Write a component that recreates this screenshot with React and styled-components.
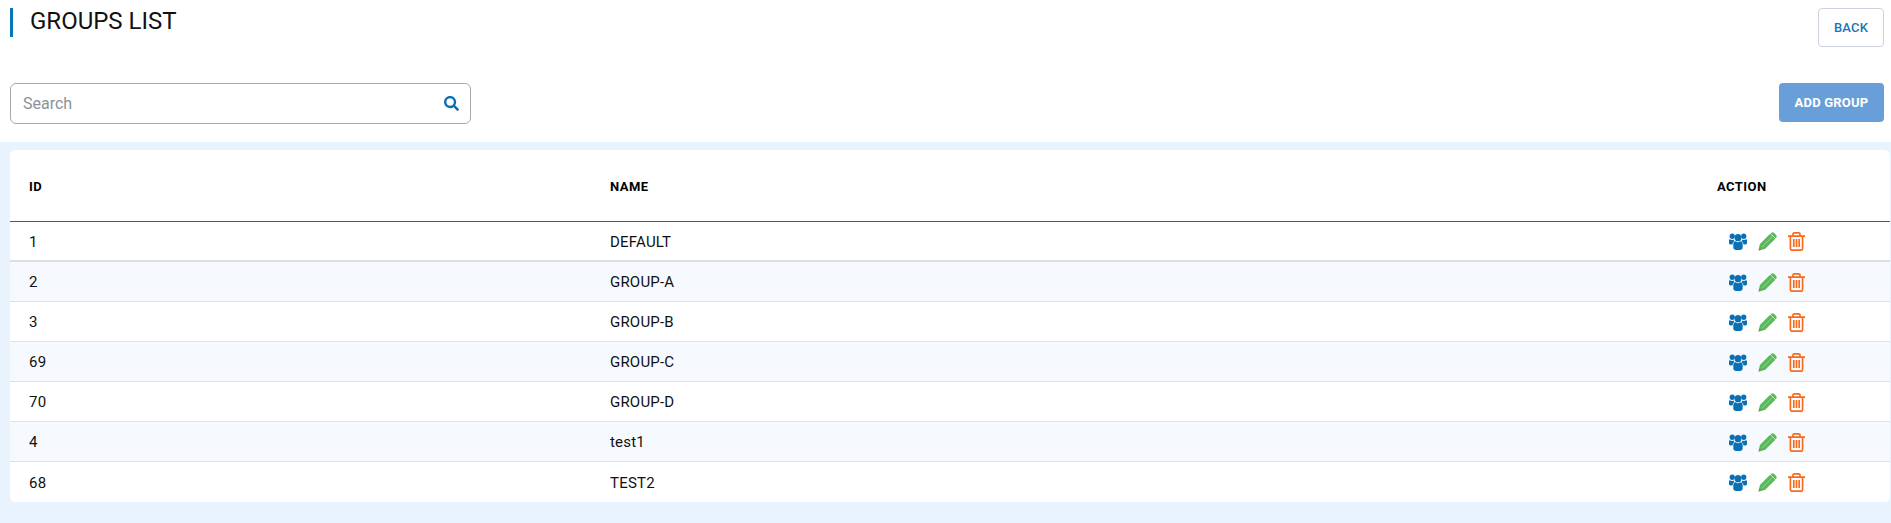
import React from 'react'
import styled, { createGlobalStyle } from 'styled-components'
import { FaSearch } from 'react-icons/fa'

const GlobalStyle = createGlobalStyle`
  html, body {
    margin: 0;
    padding: 0;
    background: #fff;
    font-family: Roboto, "Liberation Sans", sans-serif;
  }
`

const Page = styled.div`
  width: 1891px;
  height: 523px;
  overflow: hidden;
  display: flex;
  flex-direction: column;
`

const TopBar = styled.div`
  display: flex;
  justify-content: space-between;
  align-items: flex-start;
  padding: 8px 7px 0 10px;
  height: 83px;
  box-sizing: border-box;
`

const Title = styled.h1`
  margin: 0;
  height: 29px;
  border-left: 3px solid #0a78b8;
  padding-left: 17px;
  font-size: 24px;
  line-height: 27px;
  font-weight: 400;
  color: #111;
`

const BackButton = styled.button`
  width: 66px;
  height: 39px;
  box-sizing: border-box;
  background: #fff;
  border: 1px solid #ccd3de;
  border-radius: 4px;
  color: #1a75b5;
  font-family: inherit;
  font-size: 13px;
  font-weight: 500;
  letter-spacing: 0.2px;
  padding: 0;
`

const ToolBar = styled.div`
  display: flex;
  justify-content: space-between;
  align-items: flex-start;
  padding: 0 7px 0 10px;
  height: 59px;
`

const SearchBox = styled.div`
  width: 461px;
  height: 41px;
  box-sizing: border-box;
  border: 1px solid #aaa;
  border-radius: 6px;
  display: flex;
  align-items: center;
  justify-content: space-between;
  padding: 0 11px 0 12px;
  color: #8a919b;
  font-size: 16px;
  svg { color: #0a70b4; font-size: 15px; }
`

const AddButton = styled.button`
  width: 105px;
  height: 39px;
  background: #689fd9;
  border: none;
  border-radius: 4px;
  color: #fff;
  font-family: inherit;
  font-size: 13px;
  font-weight: 700;
  letter-spacing: 0.2px;
  padding: 0;
`

const Content = styled.div`
  flex: 1;
  background: #e9f3fe;
  padding: 8px 1px 0 10px;
`

const Card = styled.div`
  background: #fff;
  border-radius: 6px;
  overflow: hidden;
`

const Row = styled.div`
  display: grid;
  grid-template-columns: 581px 1107px 1fr;
  align-items: center;
  box-sizing: border-box;
  padding: 1px 0 0 19px;
  height: ${p => p.$height || 40}px;
  font-size: 15px;
  letter-spacing: 0.2px;
  color: #111;
  background: ${p => (p.$alt ? '#f6faff' : '#fff')};
  border-bottom: ${p => p.$border || '1px solid #dfe3e8'};
`

const HeadCell = styled.div`
  font-size: 13px;
  font-weight: 700;
  color: #000;
  letter-spacing: 0.45px;
`

const Actions = styled.div`
  display: flex;
  align-items: center;
  gap: 11px;
  padding-left: 12px;
`

const groups = [
  { id: 1, name: 'DEFAULT' },
  { id: 2, name: 'GROUP-A' },
  { id: 3, name: 'GROUP-B' },
  { id: 69, name: 'GROUP-C' },
  { id: 70, name: 'GROUP-D' },
  { id: 4, name: 'test1' },
  { id: 68, name: 'TEST2' },
]

// fa4 style glyphs, the ones in react-icons are thinner
const UsersIcon = () => (
  <svg width="18" height="19" viewBox="0 0 20 20" preserveAspectRatio="none" fill="#0a70b4">
    <circle cx="10" cy="6" r="3.800" />
    <circle cx="3.600" cy="4.500" r="2.900" />
    <circle cx="16.400" cy="4.500" r="2.900" />
    <path d="M4.800 12.500c0-1.500 1.100-2.700 2.600-2.700.8.600 1.600.9 2.600.9s1.800-.3 2.600-.9c1.500 0 2.600 1.200 2.600 2.700v4c0 1.700-1.600 2.500-5.200 2.500s-5.200-.8-5.200-2.500z" />
    <path d="M0 9c0-.9.500-1.400 1.100-1.400.7.500 1.500.8 2.400.8.600 0 1.200-.1 1.700-.4.100.7.400 1.200.9 1.700-1.300.6-2.200 1.800-2.200 3.400H1.400C.5 13.100 0 12.600 0 11.700z" />
    <path d="M20 9c0-.9-.5-1.400-1.100-1.400-.7.500-1.500.8-2.400.8-.6 0-1.200-.1-1.700-.4-.1.700-.4 1.200-.9 1.700 1.300.6 2.200 1.800 2.200 3.400h2.500c.9 0 1.400-.5 1.400-1.400z" />
  </svg>
)

const PencilIcon = () => (
  <svg width="19" height="19" viewBox="0 0 20 20">
    <path fill="#5cb85c" d="M.6 19.400l1.400-6.800L12.800 1.800 18.200 7.200 7.400 18z" />
    <path fill="#5cb85c" d="M14 .9c.8-.8 2-.8 2.800 0l2.300 2.300c.8.8.8 2 0 2.800l-.7.700-5.100-5.100z" />
    <path stroke="#a5d6a5" strokeWidth=".8" fill="none" d="M4.200 15.800L14.800 5.200" />
    <path fill="#7f8f5a" d="M.6 19.400l.7-3.400 2.700 2.700z" />
  </svg>
)

const TrashIcon = () => (
  <svg width="17" height="19" viewBox="0 0 17 19" fill="none" stroke="#f96a1c" strokeWidth="1.700">
    <path d="M0 4.200h17M5 4V2.200C5 1.300 5.600.9 6.300.9h4.400c.7 0 1.300.4 1.300 1.300V4" />
    <path d="M2.400 4.200v12.300c0 1 .7 1.700 1.700 1.700h8.800c1 0 1.700-.7 1.700-1.700V4.200" />
    <path d="M5.800 7v8M8.500 7v8M11.200 7v8" />
  </svg>
)

export default function App() {
  return (
    <Page>
      <GlobalStyle />
      <TopBar>
        <Title>GROUPS LIST</Title>
        <BackButton>BACK</BackButton>
      </TopBar>
      <ToolBar>
        <SearchBox>
          <span>Search</span>
          <FaSearch />
        </SearchBox>
        <AddButton>ADD GROUP</AddButton>
      </ToolBar>
      <Content>
        <Card>
          <Row $height={72} $border="1px solid #0a70a8">
            <HeadCell>ID</HeadCell>
            <HeadCell>NAME</HeadCell>
            <HeadCell>ACTION</HeadCell>
          </Row>
          {groups.map((g, i) => (
            <Row
              key={g.id}
              $alt={i % 2 === 1}
              $border={i === 0 ? '2px solid #dcdfe3' : i === groups.length - 1 ? 'none' : undefined}
            >
              <div>{g.id}</div>
              <div>{g.name}</div>
              <Actions>
                <UsersIcon />
                <PencilIcon />
                <TrashIcon />
              </Actions>
            </Row>
          ))}
        </Card>
      </Content>
    </Page>
  )
}
